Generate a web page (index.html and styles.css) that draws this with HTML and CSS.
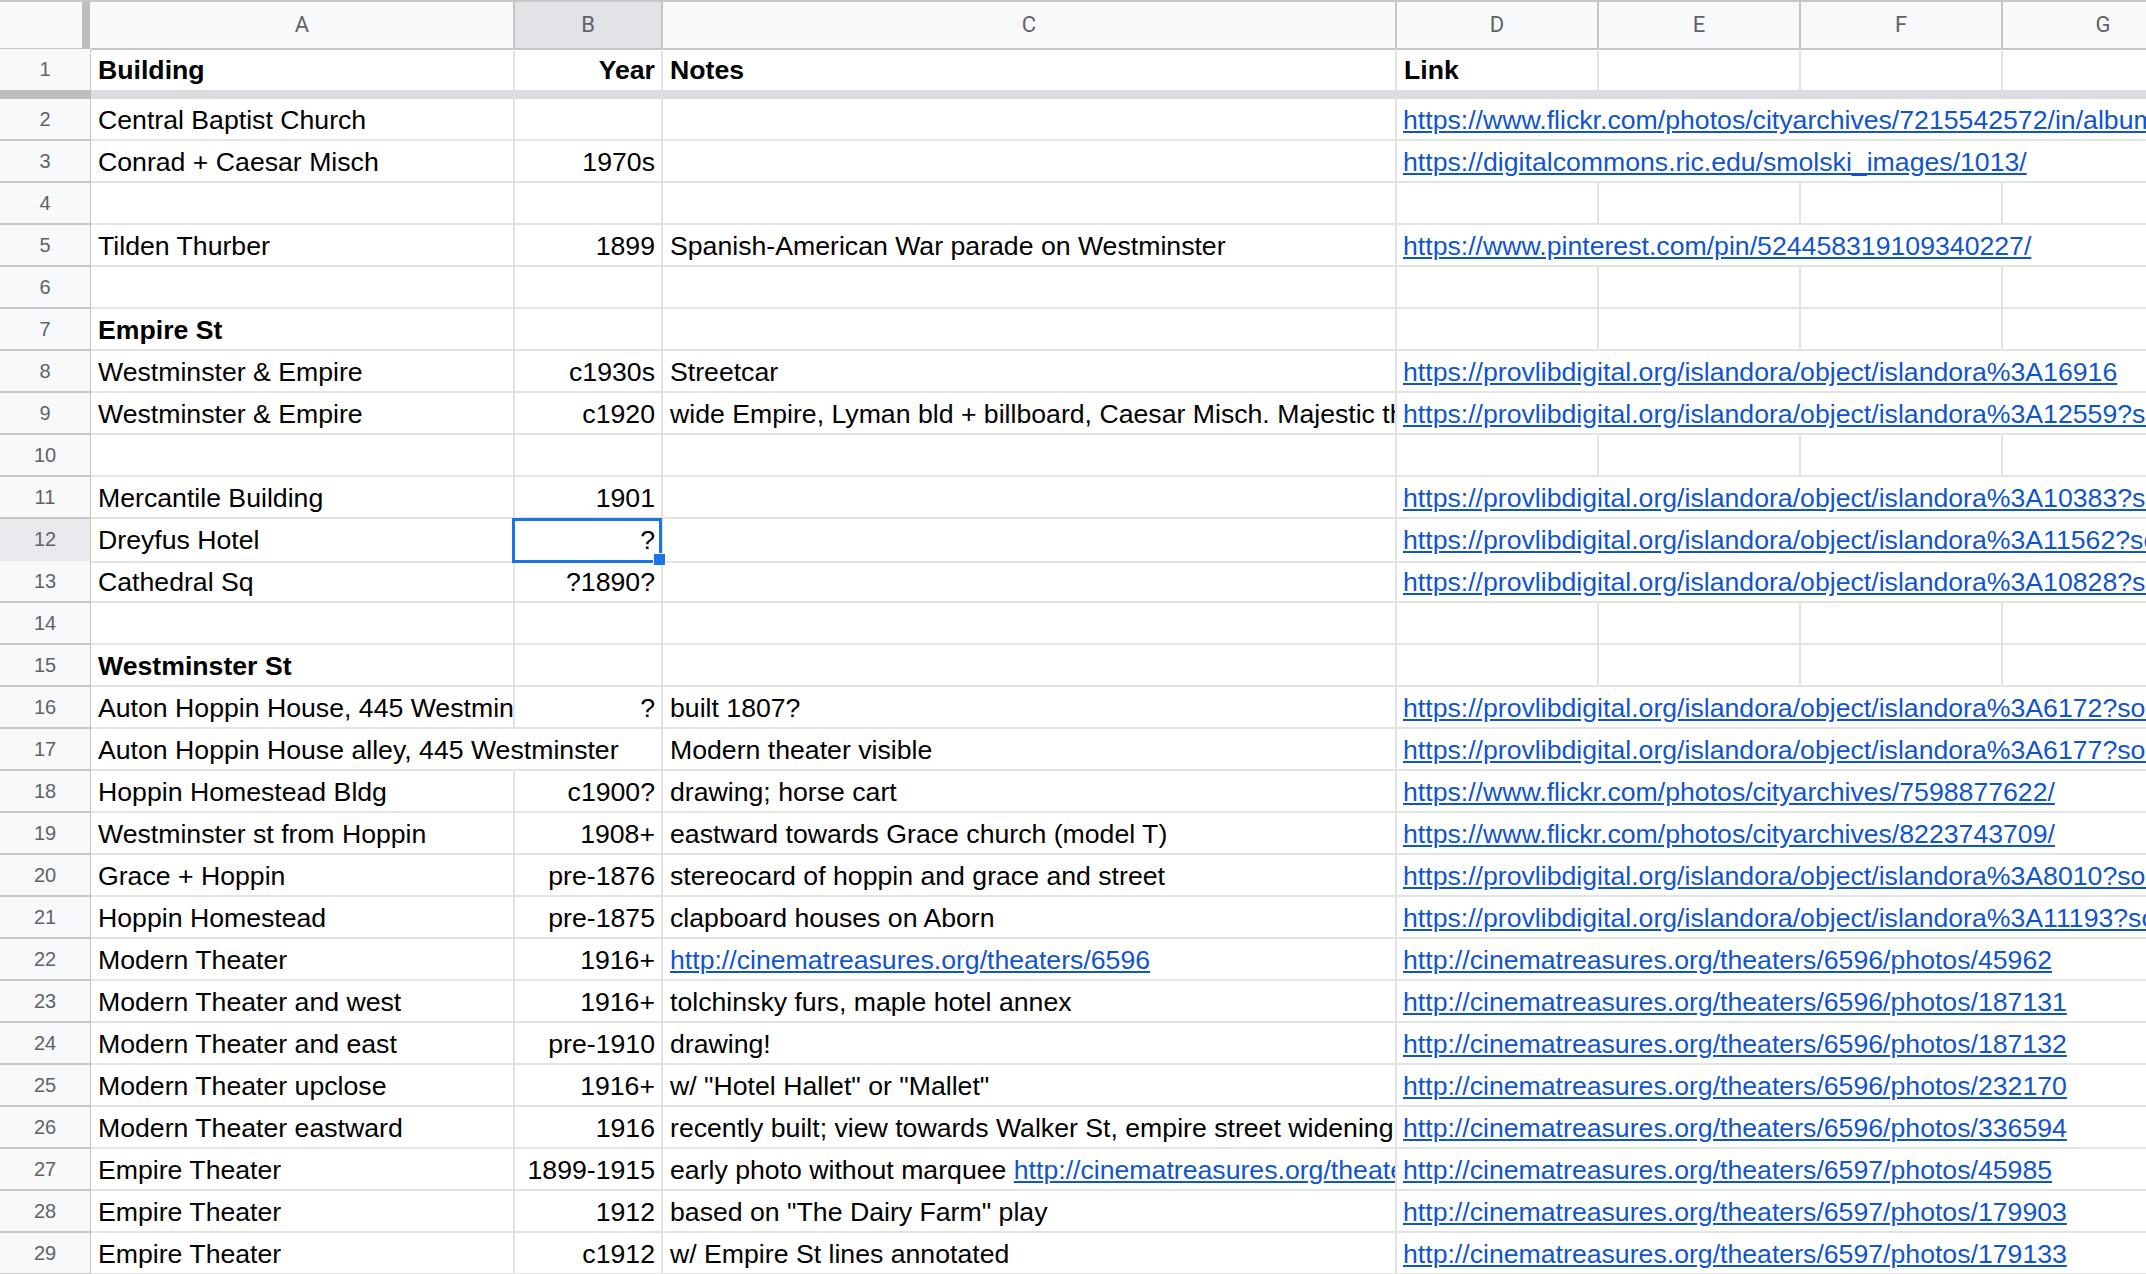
FILE: index.html
```html
<!DOCTYPE html>
<html>
<head>
<meta charset="utf-8">
<link rel="stylesheet" href="styles.css">
</head>
<body>
<div class="sheet">
  <div class="row colhead">
    <div class="corner"></div>
    <div class="ch">A</div>
    <div class="ch sel">B</div>
    <div class="ch">C</div>
    <div class="ch">D</div>
    <div class="ch">E</div>
    <div class="ch">F</div>
    <div class="ch">G</div>
  </div>
  <div class="row first">
    <div class="rh">1</div>
    <div class="cell b">Building</div>
    <div class="cell b num">Year</div>
    <div class="cell b">Notes</div>
    <div class="cell b">Link</div>
    <div class="cell"></div>
    <div class="cell"></div>
    <div class="cell"></div>
  </div>
  <div class="freeze">
    <div class="freeze-rh"></div>
    <div class="freeze-grid"></div>
  </div>

  <div class="row"><div class="rh">2</div><div class="cell">Central Baptist Church</div><div class="cell"></div><div class="cell"></div><div class="cell link">https://www.flickr.com/photos/cityarchives/7215542572/in/album-72157649386416540/</div></div>
  <div class="row"><div class="rh">3</div><div class="cell">Conrad + Caesar Misch</div><div class="cell num">1970s</div><div class="cell"></div><div class="cell link">https://digitalcommons.ric.edu/smolski_images/1013/</div></div>
  <div class="row"><div class="rh">4</div><div class="cell"></div><div class="cell"></div><div class="cell"></div><div class="cell"></div><div class="cell"></div><div class="cell"></div><div class="cell"></div></div>
  <div class="row"><div class="rh">5</div><div class="cell">Tilden Thurber</div><div class="cell num">1899</div><div class="cell">Spanish-American War parade on Westminster</div><div class="cell link">https://www.pinterest.com/pin/524458319109340227/</div></div>
  <div class="row"><div class="rh">6</div><div class="cell"></div><div class="cell"></div><div class="cell"></div><div class="cell"></div><div class="cell"></div><div class="cell"></div><div class="cell"></div></div>
  <div class="row"><div class="rh">7</div><div class="cell b">Empire St</div><div class="cell"></div><div class="cell"></div><div class="cell"></div><div class="cell"></div><div class="cell"></div><div class="cell"></div></div>
  <div class="row"><div class="rh">8</div><div class="cell">Westminster &amp; Empire</div><div class="cell num">c1930s</div><div class="cell">Streetcar</div><div class="cell link">https://provlibdigital.org/islandora/object/islandora%3A16916</div></div>
  <div class="row"><div class="rh">9</div><div class="cell">Westminster &amp; Empire</div><div class="cell num">c1920</div><div class="cell">wide Empire, Lyman bld + billboard, Caesar Misch. Majestic theater</div><div class="cell link">https://provlibdigital.org/islandora/object/islandora%3A12559?solr_nav</div></div>
  <div class="row"><div class="rh">10</div><div class="cell"></div><div class="cell"></div><div class="cell"></div><div class="cell"></div><div class="cell"></div><div class="cell"></div><div class="cell"></div></div>
  <div class="row"><div class="rh">11</div><div class="cell">Mercantile Building</div><div class="cell num">1901</div><div class="cell"></div><div class="cell link">https://provlibdigital.org/islandora/object/islandora%3A10383?solr_nav</div></div>
  <div class="row"><div class="rh sel">12</div><div class="cell">Dreyfus Hotel</div><div class="cell num active">?</div><div class="cell"></div><div class="cell link">https://provlibdigital.org/islandora/object/islandora%3A11562?solr_nav</div></div>
  <div class="row"><div class="rh">13</div><div class="cell">Cathedral Sq</div><div class="cell num">?1890?</div><div class="cell"></div><div class="cell link">https://provlibdigital.org/islandora/object/islandora%3A10828?solr_nav</div></div>
  <div class="row"><div class="rh">14</div><div class="cell"></div><div class="cell"></div><div class="cell"></div><div class="cell"></div><div class="cell"></div><div class="cell"></div><div class="cell"></div></div>
  <div class="row"><div class="rh">15</div><div class="cell b">Westminster St</div><div class="cell"></div><div class="cell"></div><div class="cell"></div><div class="cell"></div><div class="cell"></div><div class="cell"></div></div>
  <div class="row"><div class="rh">16</div><div class="cell">Auton Hoppin House, 445 Westminster</div><div class="cell num">?</div><div class="cell">built 1807?</div><div class="cell link">https://provlibdigital.org/islandora/object/islandora%3A6172?solr_nav</div></div>
  <div class="row"><div class="rh">17</div><div class="cell span2">Auton Hoppin House alley, 445 Westminster</div><div class="cell">Modern theater visible</div><div class="cell link">https://provlibdigital.org/islandora/object/islandora%3A6177?solr_nav</div></div>
  <div class="row"><div class="rh">18</div><div class="cell">Hoppin Homestead Bldg</div><div class="cell num">c1900?</div><div class="cell">drawing; horse cart</div><div class="cell link">https://www.flickr.com/photos/cityarchives/7598877622/</div></div>
  <div class="row"><div class="rh">19</div><div class="cell">Westminster st from Hoppin</div><div class="cell num">1908+</div><div class="cell">eastward towards Grace church (model T)</div><div class="cell link">https://www.flickr.com/photos/cityarchives/8223743709/</div></div>
  <div class="row"><div class="rh">20</div><div class="cell">Grace + Hoppin</div><div class="cell num">pre-1876</div><div class="cell">stereocard of hoppin and grace and street</div><div class="cell link">https://provlibdigital.org/islandora/object/islandora%3A8010?solr_nav</div></div>
  <div class="row"><div class="rh">21</div><div class="cell">Hoppin Homestead</div><div class="cell num">pre-1875</div><div class="cell">clapboard houses on Aborn</div><div class="cell link">https://provlibdigital.org/islandora/object/islandora%3A11193?solr_nav</div></div>
  <div class="row"><div class="rh">22</div><div class="cell">Modern Theater</div><div class="cell num">1916+</div><div class="cell"><a href="#">http://cinematreasures.org/theaters/6596</a></div><div class="cell link">http://cinematreasures.org/theaters/6596/photos/45962</div></div>
  <div class="row"><div class="rh">23</div><div class="cell">Modern Theater and west</div><div class="cell num">1916+</div><div class="cell">tolchinsky furs, maple hotel annex</div><div class="cell link">http://cinematreasures.org/theaters/6596/photos/187131</div></div>
  <div class="row"><div class="rh">24</div><div class="cell">Modern Theater and east</div><div class="cell num">pre-1910</div><div class="cell">drawing!</div><div class="cell link">http://cinematreasures.org/theaters/6596/photos/187132</div></div>
  <div class="row"><div class="rh">25</div><div class="cell">Modern Theater upclose</div><div class="cell num">1916+</div><div class="cell">w/ "Hotel Hallet" or "Mallet"</div><div class="cell link">http://cinematreasures.org/theaters/6596/photos/232170</div></div>
  <div class="row"><div class="rh">26</div><div class="cell">Modern Theater eastward</div><div class="cell num">1916</div><div class="cell">recently built; view towards Walker St, empire street widening</div><div class="cell link">http://cinematreasures.org/theaters/6596/photos/336594</div></div>
  <div class="row"><div class="rh">27</div><div class="cell">Empire Theater</div><div class="cell num">1899-1915</div><div class="cell">early photo without marquee <a href="#">http://cinematreasures.org/theaters/6597</a></div><div class="cell link">http://cinematreasures.org/theaters/6597/photos/45985</div></div>
  <div class="row"><div class="rh">28</div><div class="cell">Empire Theater</div><div class="cell num">1912</div><div class="cell">based on "The Dairy Farm" play</div><div class="cell link">http://cinematreasures.org/theaters/6597/photos/179903</div></div>
  <div class="row"><div class="rh">29</div><div class="cell">Empire Theater</div><div class="cell num">c1912</div><div class="cell">w/ Empire St lines annotated</div><div class="cell link">http://cinematreasures.org/theaters/6597/photos/179133</div></div>
</div>
</body>
</html>
```

FILE: styles.css
```css
html, body {
  margin: 0;
  padding: 0;
  background: #ffffff;
  overflow: hidden;
}

.sheet {
  width: 2146px;
  height: 1274px;
  overflow: hidden;
  font-family: "Liberation Sans", Arial, sans-serif;
  font-size: 26.67px;
  color: #000000;
}

.row {
  display: grid;
  grid-template-columns: 91px 424px 148px 734px 202px 202px 202px 202px;
  height: 42px;
}

/* column header */
.colhead {
  height: 49px;
  border-top: 2px solid #c4c7c5;
  box-sizing: border-box;
  background: #f8f9fa;
}

.corner {
  border-right: 8px solid #bdbdbd;
  border-bottom: 2px solid #c4c7c5;
  margin-right: 1px;
  background: #f8f9fa;
}

.ch {
  font-family: Roboto, "Liberation Sans", Arial, sans-serif;
  font-size: 22px;
  color: #5f6368;
  text-align: center;
  line-height: 46px;
  border-right: 2px solid #c4c7c5;
  border-bottom: 2px solid #c4c7c5;
  background: #f8f9fa;
}

.ch.sel {
  background: #e1e3e6;
}

/* row header */
.rh {
  font-size: 20px;
  color: #5f6368;
  text-align: center;
  line-height: 40px;
  background: #f8f9fa;
  border-right: 1px solid #c4c7c5;
  border-bottom: 2px solid #c4c7c5;
}

.rh.sel {
  background: #e8eaed;
}

.first {
  height: 41px;
}

.first .rh {
  border-bottom: none;
  line-height: 41px;
}

.first .cell {
  border-bottom: none;
  padding-top: 0;
  line-height: 42px;
}

/* freeze bar */
.freeze {
  display: grid;
  grid-template-columns: 91px 1fr;
  height: 9px;
}

.freeze-rh {
  background: #bdbdbd;
}

.freeze-grid {
  background: #dadce0;
}

/* cells */
.cell {
  padding: 1px 6px 0 7px;
  line-height: 41px;
  white-space: nowrap;
  overflow: hidden;
  border-right: 2px solid #e2e3e3;
  border-bottom: 2px solid #e2e3e3;
  min-width: 0;
}

.cell.b {
  font-weight: bold;
}

.cell.num {
  text-align: right;
}

.cell.span2 {
  grid-column: span 2;
}

.cell.link {
  grid-column: span 4;
  padding-left: 6px;
  color: #1155cc;
  text-decoration: underline;
}

.cell a {
  color: #1155cc;
  text-decoration: underline;
}

/* active cell */
.cell.active {
  position: relative;
  overflow: visible;
}

.cell.active::after {
  content: "";
  position: absolute;
  left: -3px;
  top: -1px;
  right: -1px;
  bottom: -2px;
  border: 3px solid #1a73e8;
}

.cell.active::before {
  content: "";
  position: absolute;
  right: -5px;
  bottom: -5px;
  width: 11px;
  height: 11px;
  background: #1a73e8;
  border: 1px solid #ffffff;
  z-index: 2;
}
```
